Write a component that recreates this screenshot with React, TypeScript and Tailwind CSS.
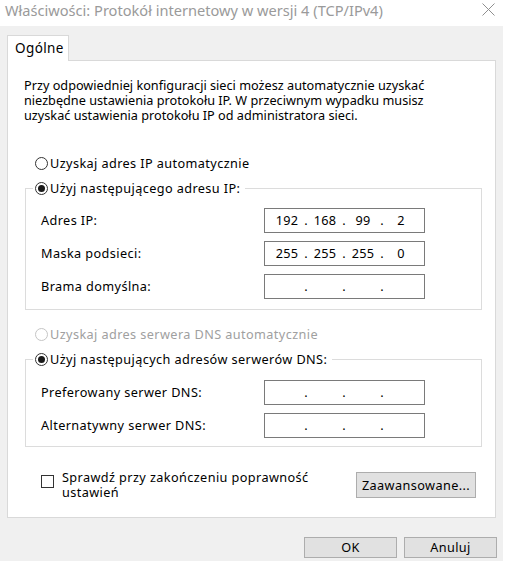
type RadioProps = { label: string; checked?: boolean; disabled?: boolean };

function Radio({ label, checked, disabled }: RadioProps) {
  return (
    <div className="flex h-[18px] items-center gap-[2px]">
      <span
        className={
          "flex h-[13px] w-[13px] items-center justify-center rounded-full border bg-white " +
          (disabled ? "border-[#c5c5c5]" : "border-[#333333]")
        }
      >
        {checked && <span className="h-[7px] w-[7px] rounded-full bg-[#1a1a1a]" />}
      </span>
      <span className={"tracking-[0.4px] " + (disabled ? "text-[#a0a0a0]" : "text-black")}>{label}</span>
    </div>
  );
}

function IpField({ octets }: { octets: string[] }) {
  return (
    <div className="flex h-[25px] w-[161px] items-center border border-[#7a7a7a] bg-white pl-[6px] leading-[23px]">
      {octets.map((o, i) => (
        <div key={i} className="flex">
          <span className="w-[32px] text-center tracking-[0.3px]">{o}</span>
          {i < 3 && <span className="w-[6px] text-center">.</span>}
        </div>
      ))}
    </div>
  );
}

function Row({ label, octets }: { label: string; octets: string[] }) {
  return (
    <div className="flex h-[25px] items-center">
      <span className="w-[223px] tracking-[0.4px]">{label}</span>
      <IpField octets={octets} />
    </div>
  );
}

const empty = ["", "", "", ""];

export default function App() {
  return (
    <div className="h-[565px] w-[508px] bg-white font-['Noto_Sans',sans-serif] text-[12.7px] leading-[15px] text-black">
      <div className="flex h-[26px] items-start justify-between pt-[1px]">
        <span className="ml-[5px] text-[14.6px] leading-[18px] text-[#9a9a9a]">
          Właściwości: Protokół internetowy w wersji 4 (TCP/IPv4)
        </span>
        <svg width="13" height="13" viewBox="0 0 13 13" className="mr-[13px] mt-[2px]">
          <path d="M0.5 0.5 L12.5 12.5 M12.5 0.5 L0.5 12.5" stroke="#8f8f8f" strokeWidth="1" />
        </svg>
      </div>

      <div className="h-[535px] w-[503px] bg-[#f0f0f0] pl-[7px] pt-[9px]">
        <div className="relative z-10 -mb-px flex h-[26px] w-[62px] items-center border border-b-0 border-[#d9d9d9] bg-white pl-[7px] text-[13.5px] tracking-[0.4px]">
          Ogólne
        </div>

        <div className="h-[458px] w-[489px] border border-[#d9d9d9] bg-white px-[16px] pt-[17px]">
          <p>
            Przy odpowiedniej konfiguracji sieci możesz automatycznie uzyskać
            <br />
            niezbędne ustawienia protokołu IP. W przeciwnym wypadku musisz
            <br />
            uzyskać ustawienia protokołu IP od administratora sieci.
          </p>

          <div className="mt-[31px] ml-[11px]">
            <Radio label="Uzyskaj adres IP automatycznie" />
          </div>

          <fieldset className="mt-[7px] ml-[1px] w-[457px] border border-[#dcdcdc] pb-[10px] pl-[15px] pt-[11px]">
            <legend className="-ml-[8px] pl-[2px] pr-[5px]">
              <Radio label="Użyj następującego adresu IP:" checked />
            </legend>
            <div className="flex flex-col gap-[8px]">
              <Row label="Adres IP:" octets={["192", "168", "99", "2"]} />
              <Row label="Maska podsieci:" octets={["255", "255", "255", "0"]} />
              <Row label="Brama domyślna:" octets={empty} />
            </div>
          </fieldset>

          <div className="mt-[15px] ml-[11px]">
            <Radio label="Uzyskaj adres serwera DNS automatycznie" disabled />
          </div>

          <fieldset className="mt-[7px] ml-[1px] w-[457px] border border-[#dcdcdc] pb-[8px] pl-[15px] pt-[12px]">
            <legend className="-ml-[8px] pl-[2px] pr-[5px]">
              <Radio label="Użyj następujących adresów serwerów DNS:" checked />
            </legend>
            <div className="flex flex-col gap-[8px]">
              <Row label="Preferowany serwer DNS:" octets={empty} />
              <Row label="Alternatywny serwer DNS:" octets={empty} />
            </div>
          </fieldset>

          <div className="mt-[23px] flex items-start">
            <span className="ml-[17px] mt-[5px] h-[13px] w-[13px] border border-[#333333] bg-white" />
            <span className="ml-[8px] tracking-[0.4px]">
              Sprawdź przy zakończeniu poprawność
              <br />
              ustawień
            </span>
            <button className="ml-auto mr-[3px] mt-[2px] h-[26px] w-[120px] border border-[#adadad] bg-[#e1e1e1] text-center tracking-[0.4px]">
              Zaawansowane...
            </button>
          </div>
        </div>

        <div className="mt-[19px] flex w-[490px] justify-end gap-[7px]">
          <button className="h-[21px] w-[93px] border border-[#adadad] bg-[#e1e1e1] tracking-[0.4px]">OK</button>
          <button className="h-[21px] w-[93px] border border-[#adadad] bg-[#e1e1e1] tracking-[0.4px]">Anuluj</button>
        </div>
      </div>
    </div>
  );
}
